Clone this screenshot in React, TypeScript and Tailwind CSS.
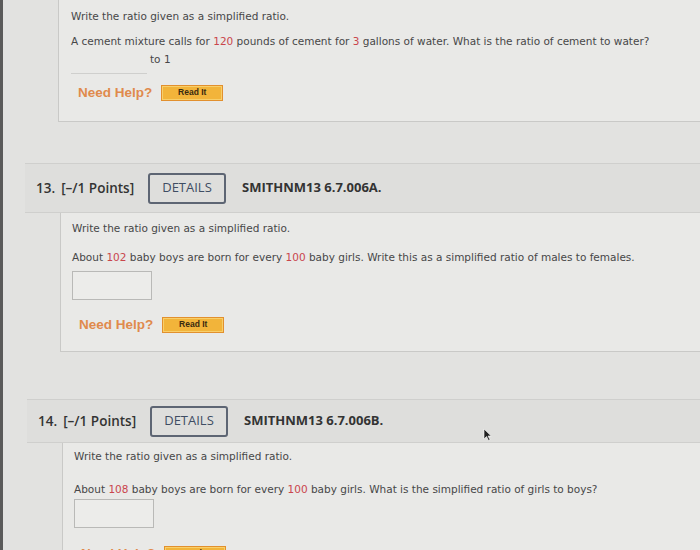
import React from "react";

const body = "font-['DejaVu_Sans',Verdana,sans-serif] text-[10.5px] text-[#474747]";

function Num({ children }: { children: React.ReactNode }) {
  return <span className="text-[#c9464c]">{children}</span>;
}

function NeedHelp() {
  return (
    <div className="flex items-center gap-[9px]">
      <span className="font-['Liberation_Sans',Arial,sans-serif] font-bold text-[13.5px] text-[#e08a4c]">Need Help?</span>
      <span className="flex h-[16px] w-[62px] items-center justify-center border border-[#e2902e] bg-[#f2b43a] font-['Liberation_Sans',Arial,sans-serif] text-[8.5px] font-bold text-[#3a2a10] shadow-[inset_0_0_0_1px_#f8cf6a]">
        Read It
      </span>
    </div>
  );
}

function Header({ num, code, tall }: { num: number; code: string; tall?: boolean }) {
  return (
    <div
      className={`flex items-center border-y border-[#cfcfcd] bg-[#dededc] pl-[11px] font-['Open_Sans',sans-serif] text-[13.5px] font-semibold text-[#333] ${
        tall ? "h-[50px]" : "h-[44px]"
      }`}
    >
      <span className="flex w-[112px] gap-[6px]">
        <span>{num}.</span>
        <span>[–/1 Points]</span>
      </span>
      <span className="flex h-[31px] w-[78px] items-center justify-center rounded-[3px] border-2 border-[#5d6573] text-[13px] font-normal text-[#3f4d63]">
        DETAILS
      </span>
      <span className="ml-[16px] text-[13px] font-bold text-[#333]">{code}</span>
    </div>
  );
}

export default function App() {
  return (
    <div className="relative h-[550px] w-[700px] overflow-hidden border-l-[3px] border-[#5a5a5a] bg-[#e2e2e0]">
      {/* question 12 body */}
      <div className={`ml-[55px] h-[122px] border-b border-l border-[#c9c9c7] bg-[#e9e9e7] pl-[12px] pt-[9px] ${body}`}>
        <p>Write the ratio given as a simplified ratio.</p>
        <p className="mt-[9px]">
          A cement mixture calls for <Num>120</Num> pounds of cement for <Num>3</Num> gallons of water. What is the ratio of cement to water?
        </p>
        <div className="flex items-end">
          <span className="block h-[24px] w-[76px] border-b border-[#cfcfcd]" />
          <span className="mb-[6px] ml-[3px]">to 1</span>
        </div>
        <div className="mt-[9px] pl-[7px]">
          <NeedHelp />
        </div>
      </div>

      {/* question 13 */}
      <div className="ml-[22px] mt-[41px]">
        <Header num={13} code="SMITHNM13 6.7.006A." tall />
        <div className={`ml-[35px] h-[139px] border-b border-l border-[#c9c9c7] bg-[#e9e9e7] pl-[11px] pt-[8px] ${body}`}>
          <p>Write the ratio given as a simplified ratio.</p>
          <p className="mt-[13px]">
            About <Num>102</Num> baby boys are born for every <Num>100</Num> baby girls. Write this as a simplified ratio of males to females.
          </p>
          <div className="mt-[5px] h-[29px] w-[80px] border border-[#b9b9b7] bg-[#ececea]" />
          <div className="mt-[15px] pl-[7px]">
            <NeedHelp />
          </div>
        </div>
      </div>

      {/* question 14 */}
      <div className="ml-[24px] mt-[47px]">
        <Header num={14} code="SMITHNM13 6.7.006B." />
        <div className={`ml-[35px] h-[120px] border-l border-[#c9c9c7] bg-[#e9e9e7] pl-[11px] pt-[6px] ${body}`}>
          <p>Write the ratio given as a simplified ratio.</p>
          <p className="mt-[17px]">
            About <Num>108</Num> baby boys are born for every <Num>100</Num> baby girls. What is the simplified ratio of girls to boys?
          </p>
          <div className="mt-[1px] h-[29px] w-[80px] border border-[#b9b9b7] bg-[#ececea]" />
          <div className="mt-[16px] pl-[7px]">
            <NeedHelp />
          </div>
        </div>
      </div>

      {/* mouse cursor */}
      <svg className="absolute left-[480px] top-[428px]" width="9" height="13" viewBox="0 0 9 13">
        <path d="M1 1 L1 11 L3.5 8.5 L5.5 12.5 L7 11.8 L5 8 L8.2 8 Z" fill="#222" stroke="#fff" strokeWidth="0.6" />
      </svg>
    </div>
  );
}
